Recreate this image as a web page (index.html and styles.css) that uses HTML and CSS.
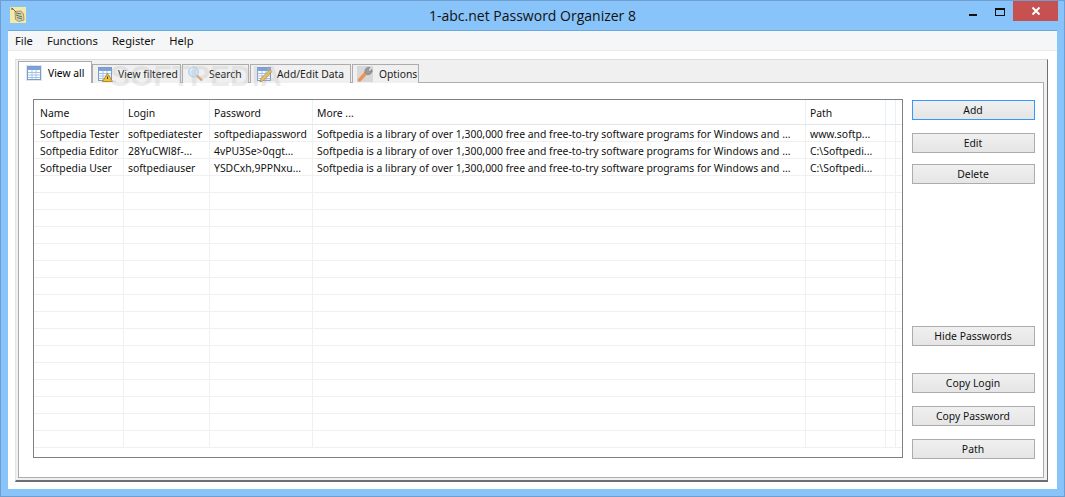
FILE: index.html
```html
<!DOCTYPE html>
<html lang="en">
<head>
<meta charset="utf-8">
<title>1-abc.net Password Organizer 8</title>
<link rel="stylesheet" href="styles.css">
</head>
<body>
<div class="window">
  <header class="titlebar">
    <svg class="app-icon" width="16" height="16" viewBox="0 0 16 16"><rect width="16" height="16" fill="#f3eaa6"/><path d="M5 4.500l6-.5 2.500 3 .5 6-5 1.500-3.500-2z" fill="#d4cfa8" stroke="#8a8870" stroke-width=".8"/><path d="M1 1l2 1 3 3M3 1L1.500 3M6 6l5 1M6 8l6 2M7 10.500l5 1.500" stroke="#55523c" stroke-width=".8" fill="none"/></svg>
    <h1 class="title">1-abc.net Password Organizer 8</h1>
    <div class="controls">
      <div class="ctl"><span class="min"></span></div>
      <div class="ctl"><span class="max"></span></div>
      <div class="close"><svg width="10" height="10" viewBox="0 0 10 10"><path d="M1.500 1.500l7 7M8.500 1.500l-7 7" stroke="#fff" stroke-width="2"/></svg></div>
    </div>
  </header>
  <div class="client">
    <nav class="menu"><span>File</span><span>Functions</span><span>Register</span><span>Help</span></nav>
    <main class="content">
      <div class="tabpanel">
        <div class="tabs">
          <div class="tab active">
            <svg class="ico" viewBox="0 0 16 16"><rect width="16" height="16" fill="#dfe6ef"/><use href="#grid"/></svg>View all
          </div>
          <div class="tab t-filter">
            <svg class="ico" viewBox="0 0 16 16"><use href="#grid"/><path d="M10.500 7.500L15.500 15.500H5.500z" fill="#f2c230" stroke="#a97a10" stroke-width=".8"/><path d="M10.500 10.500v2.500" stroke="#5a4008"/></svg>View filtered
          </div>
          <div class="tab t-search">
            <svg class="ico" viewBox="0 0 16 16"><circle cx="6.500" cy="6" r="5" fill="#cfe6f8" stroke="#b4cfe4"/><path d="M3.500 4.500a3.500 3.500 0 0 1 3-2" stroke="#fff" fill="none"/><path d="M10 9.500l5 5" stroke="#d9a270" stroke-width="2.200"/></svg>Search
          </div>
          <div class="tab t-edit">
            <svg class="ico" viewBox="0 0 16 16"><use href="#grid"/><path d="M14 3.500L16 5.500 7.500 14.500 4 16l1-3.500z" fill="#f0bf54" stroke="#a9812f" stroke-width=".7"/></svg>Add/Edit Data
          </div>
          <div class="tab t-opt">
            <svg class="ico" viewBox="0 0 16 16"><rect width="16" height="16" fill="#d8d8d8"/><path d="M2.500 14L9.500 6.500" stroke="#ee9258" stroke-width="3.400" stroke-linecap="round"/><path d="M8 6.500a4 4 0 0 1 5-5l-2 2.500 1.500 1.500 2.500-2a4 4 0 0 1-5 5z" fill="#9a9a9a" stroke="#777" stroke-width=".6"/></svg>Options
          </div>
        </div>
        <div class="page">
          <div class="grid">
            <div class="row head"><span>Name</span><span>Login</span><span>Password</span><span>More ...</span><span>Path</span><span></span></div>
            <div class="row"><span>Softpedia Tester</span><span>softpediatester</span><span>softpediapassword</span><span>Softpedia is a library of over 1,300,000 free and free-to-try software programs for Windows and ...</span><span>www.softp...</span><span></span></div>
            <div class="row"><span>Softpedia Editor</span><span>28YuCWl8f-...</span><span>4vPU3Se&gt;0qgt...</span><span>Softpedia is a library of over 1,300,000 free and free-to-try software programs for Windows and ...</span><span>C:\Softpedi...</span><span></span></div>
            <div class="row"><span>Softpedia User</span><span>softpediauser</span><span>YSDCxh,9PPNxu...</span><span>Softpedia is a library of over 1,300,000 free and free-to-try software programs for Windows and ...</span><span>C:\Softpedi...</span><span></span></div>
            <div class="row"><span></span><span></span><span></span><span></span><span></span><span></span></div>
            <div class="row"><span></span><span></span><span></span><span></span><span></span><span></span></div>
            <div class="row"><span></span><span></span><span></span><span></span><span></span><span></span></div>
            <div class="row"><span></span><span></span><span></span><span></span><span></span><span></span></div>
            <div class="row"><span></span><span></span><span></span><span></span><span></span><span></span></div>
            <div class="row"><span></span><span></span><span></span><span></span><span></span><span></span></div>
            <div class="row"><span></span><span></span><span></span><span></span><span></span><span></span></div>
            <div class="row"><span></span><span></span><span></span><span></span><span></span><span></span></div>
            <div class="row"><span></span><span></span><span></span><span></span><span></span><span></span></div>
            <div class="row"><span></span><span></span><span></span><span></span><span></span><span></span></div>
            <div class="row"><span></span><span></span><span></span><span></span><span></span><span></span></div>
            <div class="row"><span></span><span></span><span></span><span></span><span></span><span></span></div>
            <div class="row"><span></span><span></span><span></span><span></span><span></span><span></span></div>
            <div class="row"><span></span><span></span><span></span><span></span><span></span><span></span></div>
            <div class="row"><span></span><span></span><span></span><span></span><span></span><span></span></div>
            <div class="row"><span></span><span></span><span></span><span></span><span></span><span></span></div>
          </div>
          <aside class="buttons">
            <button class="btn focus">Add</button>
            <button class="btn edit">Edit</button>
            <button class="btn del">Delete</button>
            <button class="btn hide">Hide Passwords</button>
            <button class="btn login">Copy Login</button>
            <button class="btn pass">Copy Password</button>
            <button class="btn path">Path</button>
          </aside>
        </div>
      </div>
      <div class="watermark">SOFTPEDIA</div>
    </main>
  </div>
</div>
<svg width="0" height="0" class="defs"><defs><g id="grid"><rect x="1.500" y="1.500" width="13" height="13" fill="#fff" stroke="#7d9bc9"/><rect x="2" y="2" width="12" height="3" fill="#7aa3dc"/><path d="M2 7.500h12M2 10h12M2 12.500h12M6 5v9M10 5v9" stroke="#a4c3e8"/></g></defs></svg>
</body>
</html>
```
FILE: styles.css
```css
* { box-sizing: border-box; }
html, body { margin: 0; padding: 0; }
body { width: 1065px; height: 497px; overflow: hidden; font-family: "Noto Sans", sans-serif; font-size: 10.4px; color: #111; }
.defs { position: absolute; }
.window { width: 1065px; height: 497px; background: #88c4f9; border: 1px solid #6e9fd0; display: flex; flex-direction: column; }
.titlebar { height: 29px; flex: none; display: flex; align-items: flex-start; position: relative; padding: 6px 0 0 9px; }
.app-icon { flex: none; }
.title { position: absolute; left: 0; right: 0; top: 5px; margin: 0; text-align: center; font-family: "Open Sans", sans-serif; font-weight: 400; font-size: 14px; line-height: 20px; color: #111; }
.controls { margin-left: auto; display: flex; margin-top: -6px; margin-right: 6px; position: relative; }
.ctl { width: 26px; height: 20px; display: flex; align-items: center; justify-content: center; }
.min { width: 8px; height: 2px; background: #111; margin: 8px 2px 0 0; }
.max { width: 10px; height: 8px; border: 1px solid #111; border-top-width: 2px; margin-top: 2px; }
.close { width: 45px; height: 20px; background: #c75050; display: flex; align-items: center; justify-content: center; }
.client { margin: 0 7px 7px; flex: 1; display: flex; flex-direction: column; background: #fff; border-top: 1px solid #6fa8dc; min-height: 0; }
.menu { height: 20px; flex: none; background: #f5f6f7; border-bottom: 1px solid #e8e9ea; display: flex; gap: 14px; padding: 0 7px; align-items: center; font-size: 11.2px; }
.content { flex: 1; position: relative; padding: 8px 9px 7px 7px; display: flex; min-height: 0; }
.tabpanel { flex: 1; display: flex; flex-direction: column; background: #f0f0f0; border-top: 1px solid #dcdcdc; border-left: 1px solid #e3e3e3; border-right: 1px solid #6e6e6e; border-bottom: 2px solid #6e6e6e; padding: 2px 3px 2px 2px; min-height: 0; }
.tabs { display: flex; height: 21px; flex: none; align-items: flex-end; gap: 1px; margin-bottom: -1px; position: relative; z-index: 1; }
.tab { height: 19px; display: flex; align-items: center; gap: 5px; padding: 0 0 0 4px; background: #f0f0f0; border: 1px solid #acacac; border-bottom: 0; color: #222; white-space: nowrap; font-size: 10.3px; }
.tab.active { height: 22px; width: 74px; margin-right: -1px; background: #fff; padding-left: 7px; gap: 6px; color: #000; }
.t-filter { width: 89px; }
.t-search { width: 67px; gap: 6px; }
.t-edit { width: 101px; padding-left: 5px; }
.t-opt { width: 67px; gap: 6px; }
.ico { width: 16px; height: 16px; flex: none; }
.page { flex: 1; background: #fff; border: 1px solid #acacac; padding: 16px 8px 18px 14px; display: flex; gap: 9px; min-height: 0; }
.grid { width: 870px; height: 359px; border: 1px solid #808080; overflow: hidden; flex: none; background: #fff; }
.row { display: grid; grid-template-columns: 90px 86px 103px 493px 80px 10px; grid-template-rows: 16px; height: 17px; border-bottom: 1px solid #f0f0f0; }
.row span { padding: 1px 0 0 4px; line-height: 17px; border-right: 1px solid #f0f0f0; white-space: nowrap; overflow: hidden; }
.row span:first-child { padding-left: 6px; }
.row.head { height: 25px; grid-template-rows: 24px; border-bottom-color: #e5e5e5; }
.row.head span { line-height: 25px; border-right-color: #e8f1fb; }
.buttons { display: flex; flex-direction: column; width: 123px; flex: none; }
.btn { width: 123px; height: 20px; flex: none; padding: 0 1px 0 0; font: inherit; color: #111; border: 1px solid #acacac; background: linear-gradient(#f0f0f0, #e5e5e5); }
.btn.focus { border-color: #3399ff; margin-top: 1px; }
.btn.edit { margin-top: 13px; }
.btn.del { margin-top: 11px; }
.btn.hide { margin-top: 142px; }
.btn.login { margin-top: 27px; }
.btn.pass { margin-top: 13px; }
.btn.path { margin-top: 13px; }
.watermark { position: absolute; left: 102px; top: 8px; font-family: "Liberation Sans", sans-serif; font-size: 30px; line-height: 34px; font-weight: 700; color: rgba(190,190,190,.28); pointer-events: none; z-index: 2; }
```
